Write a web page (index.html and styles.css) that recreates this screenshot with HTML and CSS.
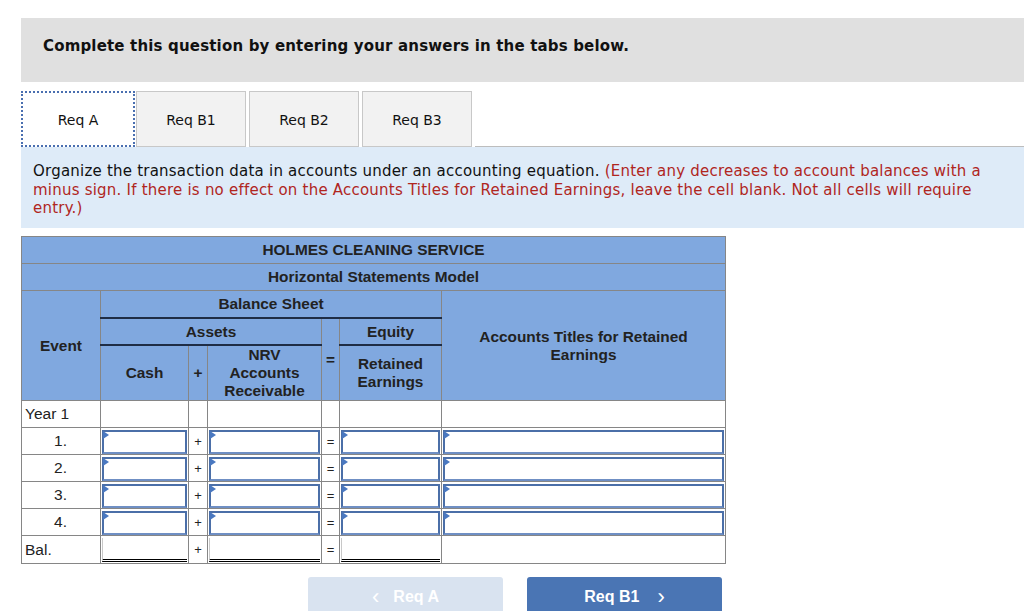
FILE: index.html
```html
<!DOCTYPE html>
<html>
<head>
<meta charset="utf-8">
<link rel="stylesheet" href="styles.css">
</head>
<body>
<div class="page">
  <div class="banner">Complete this question by entering your answers in the tabs below.</div>
  <div class="tabs">
    <div class="tab active">Req A</div>
    <div class="tab">Req B1</div>
    <div class="tab">Req B2</div>
    <div class="tab">Req B3</div>
    <div class="tab-fill"></div>
  </div>
  <div class="instructions">Organize the transaction data in accounts under an accounting equation. <span class="red">(Enter any decreases to account balances with a minus sign. If there is no effect on the Accounts Titles for Retained Earnings, leave the cell blank. Not all cells will require entry.)</span></div>

  <table class="model">
    <colgroup>
      <col class="c-event"><col class="c-cash"><col class="c-op"><col class="c-nrv"><col class="c-eq"><col class="c-re"><col class="c-acct">
    </colgroup>
    <thead>
      <tr class="hrow"><th colspan="7">HOLMES CLEANING SERVICE</th></tr>
      <tr class="hrow"><th colspan="7">Horizontal Statements Model</th></tr>
      <tr class="hrow"><th rowspan="3">Event</th><th colspan="5" class="dark-b">Balance Sheet</th><th rowspan="3" class="acct-h">Accounts Titles for Retained<br>Earnings</th></tr>
      <tr class="hrow mid"><th colspan="3" class="dark-b dark-t">Assets</th><th rowspan="2" class="op">=</th><th class="dark-b dark-t">Equity</th></tr>
      <tr class="hrow tall"><th>Cash</th><th class="op">+</th><th>NRV<br>Accounts<br>Receivable</th><th>Retained<br>Earnings</th></tr>
    </thead>
    <tbody>
      <tr><td class="lbl">Year 1</td><td></td><td></td><td></td><td></td><td></td><td></td></tr>
      <tr><td class="num">1.</td><td class="in"><span class="box"></span></td><td class="op">+</td><td class="in"><span class="box"></span></td><td class="op">=</td><td class="in"><span class="box"></span></td><td class="in"><span class="box"></span></td></tr>
      <tr><td class="num">2.</td><td class="in"><span class="box"></span></td><td class="op">+</td><td class="in"><span class="box"></span></td><td class="op">=</td><td class="in"><span class="box"></span></td><td class="in"><span class="box"></span></td></tr>
      <tr><td class="num">3.</td><td class="in"><span class="box"></span></td><td class="op">+</td><td class="in"><span class="box"></span></td><td class="op">=</td><td class="in"><span class="box"></span></td><td class="in"><span class="box"></span></td></tr>
      <tr><td class="num">4.</td><td class="in"><span class="box"></span></td><td class="op">+</td><td class="in"><span class="box"></span></td><td class="op">=</td><td class="in"><span class="box"></span></td><td class="in"><span class="box"></span></td></tr>
      <tr><td class="lbl">Bal.</td><td class="bal"><span class="dbl"></span></td><td class="op">+</td><td class="bal"><span class="dbl"></span></td><td class="op">=</td><td class="bal"><span class="dbl"></span></td><td></td></tr>
    </tbody>
  </table>

  <div class="nav">
    <div class="btn prev"><span class="chev">&lsaquo;</span>Req A</div>
    <div class="btn next">Req B1<span class="chev">&rsaquo;</span></div>
  </div>
</div>
</body>
</html>
```

FILE: styles.css
```css
html, body {
  margin: 0;
  padding: 0;
  background: #fff;
}
.page {
  padding: 18px 0 0 21px;
  font-family: "DejaVu Sans", Verdana, sans-serif;
}
.banner {
  background: #e0e0e0;
  height: 64px;
  box-sizing: border-box;
  padding: 19px 0 0 22px;
  font-weight: bold;
  font-size: 15px;
  letter-spacing: 0.17px;
  color: #111;
}
.tabs {
  display: flex;
  margin-top: 9px;
  height: 56px;
}
.tab {
  box-sizing: border-box;
  width: 110px;
  height: 56px;
  padding-top: 2px;
  background: #f2f2f2;
  border: 1px solid #c8c8c8;
  margin-right: 3px;
  display: flex;
  align-items: center;
  justify-content: center;
  font-size: 14px;
  color: #111;
}
.tab.active {
  width: 114px;
  margin-right: 1px;
  background: #fff;
  border: 2px dotted #4a6fb0;
}
.tab-fill {
  flex: 1;
  border-bottom: 1px solid #bdbdbd;
}
.instructions {
  background: #deebf8;
  height: 81px;
  box-sizing: border-box;
  padding: 15px 20px 0 12px;
  font-size: 15px;
  letter-spacing: 0.22px;
  line-height: 18.6px;
  color: #111;
}
.red {
  color: #b0261e;
}
table.model {
  margin-top: 8px;
  border-collapse: collapse;
  table-layout: fixed;
  width: 704px;
  font-family: "Liberation Sans", Arial, sans-serif;
  font-size: 15.4px;
  color: #222;
}
.c-event { width: 79px; }
.c-cash { width: 88px; }
.c-op { width: 19px; }
.c-nrv { width: 114px; }
.c-eq { width: 18px; }
.c-re { width: 102px; }
.c-acct { width: 284px; }
.model th {
  background: #80a8df;
  border: 1px solid #868686;
  font-weight: bold;
  height: 26px;
  padding: 0;
  line-height: 18px;
  text-align: center;
}
.model tr.mid th {
  height: 25px;
}
.model tr.tall th {
  height: 54px;
}
.model th.dark-b {
  border-bottom: 2px solid #1f2d45;
}
.model th.dark-t {
  border-top: 2px solid #1f2d45;
}
.model th.acct-h {
  vertical-align: middle;
}
.model td {
  border: 1px solid #868686;
  height: 26px;
  padding: 0;
  vertical-align: middle;
  font-size: 15.5px;
}
.model td.lbl {
  padding-left: 3px;
}
.model td.num {
  text-align: right;
  padding-right: 33px;
}
.model td.op {
  text-align: center;
  font-size: 13px;
}
.model td.in {
  padding: 1px 1px 0 1px;
  height: 25px;
}
.box {
  position: relative;
  display: block;
  height: 20px;
  border: 2px solid #4b6fa8;
  border-bottom-color: #6f8fc4;
  background: #fff;
}
.box::before {
  content: "";
  position: absolute;
  left: -1px;
  top: -1px;
  border-left: 6px solid #4a78c0;
  border-top: 4px solid transparent;
  border-bottom: 4px solid transparent;
}
.model td.bal {
  vertical-align: bottom;
  padding: 0 1px 1px 1px;
}
.dbl {
  display: block;
  height: 21px;
  border-left: 1px solid #c8c8c8;
  border-bottom: 3px double #000;
}
.nav {
  display: flex;
  gap: 24px;
  margin-top: 13px;
  padding-left: 287px;
  font-family: "Liberation Sans", Arial, sans-serif;
}
.btn {
  width: 195px;
  height: 40px;
  border-radius: 3px 3px 0 0;
  display: flex;
  justify-content: center;
  padding-top: 11px;
  box-sizing: border-box;
  color: #fff;
  font-weight: bold;
  font-size: 16px;
}
.btn.prev {
  background: #d9e3f0;
}
.btn.next {
  background: #4a75b4;
}
.chev {
  font-size: 22px;
  line-height: 17px;
  font-weight: normal;
}
.prev .chev { margin-right: 14px; }
.next .chev { margin-left: 18px; }
```
